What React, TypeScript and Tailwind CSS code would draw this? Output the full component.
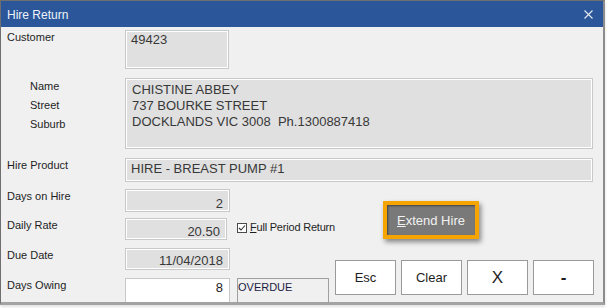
import React from "react";

const ro =
  "bg-[#e0e0e0] border border-[#c8c8c8] shadow-[inset_0_0_0_1px_#ffffff] text-[13px] text-[#383838]";

function Label({ children }: { children: React.ReactNode }) {
  return <div className="w-[124px] pl-[6px] pt-[1px] shrink-0">{children}</div>;
}

function Btn({ children, cls = "" }: { children: React.ReactNode; cls?: string }) {
  return (
    <div
      className={
        "w-[61px] h-[35px] bg-white border border-[#9a9a9a] flex items-center justify-center text-[#1e1e1e] " +
        cls
      }
    >
      {children}
    </div>
  );
}

export default function App() {
  return (
    <div className="w-[607px] h-[308px] bg-white font-['Liberation_Sans',Arial,sans-serif]">
      <div className="w-[605px] border-t border-l border-[#6f6f6f] border-r-2 border-r-[#8c8c8c] border-b-[3px] border-b-[#a3a3a3] shadow-[0_2px_3px_rgba(0,0,0,0.12)]">
        {/* title bar */}
        <div className="h-[26px] bg-[#2b579a] flex items-center justify-between pl-[6px] pr-[10px] pt-[2px]">
          <span className="text-[12px] leading-[14px] text-[#eef2f8]">Hire Return</span>
          <svg width="9" height="9" viewBox="0 0 9 9" className="-mt-[2px]">
            <path d="M0.5 0.5 L8.5 8.5 M8.5 0.5 L0.5 8.5" stroke="#e4e9f1" strokeWidth="1.1" />
          </svg>
        </div>

        {/* body */}
        <div className="h-[275px] bg-[#f0f0f0] overflow-hidden pt-[3px] text-[11px] leading-[13px] text-[#1e1e1e]">
          {/* Customer */}
          <div className="flex">
            <Label>Customer</Label>
            <div className={ro + " w-[104px] h-[39px] pl-[5px] pt-[1px] leading-[16px]"}>49423</div>
          </div>

          {/* Address */}
          <div className="flex mt-[9px]">
            <div className="w-[124px] pl-[29px] pt-[2px] shrink-0 flex flex-col">
              <div className="h-[19px]">Name</div>
              <div className="h-[19px]">Street</div>
              <div className="h-[19px]">Suburb</div>
            </div>
            <div className={ro + " w-[468px] h-[71px] pl-[6px] pt-[3px] leading-[16px]"}>
              <div>CHISTINE ABBEY</div>
              <div>737 BOURKE STREET</div>
              <div className="whitespace-pre">DOCKLANDS VIC 3008  Ph.1300887418</div>
            </div>
          </div>

          {/* Hire Product */}
          <div className="flex mt-[9px]">
            <Label>Hire Product</Label>
            <div className={ro + " w-[468px] h-[24px] pl-[5px] pt-[2px] leading-[16px]"}>
              HIRE - BREAST PUMP #1
            </div>
          </div>

          <div className="flex">
            {/* left column */}
            <div className="w-[334px] shrink-0">
              <div className="flex mt-[7px]">
                <Label>Days on Hire</Label>
                <div className={ro + " w-[105px] h-[23px] pr-[6px] pt-[7px] leading-[13px] text-right"}>2</div>
              </div>
              <div className="flex mt-[6px] h-[22px]">
                <Label>Daily Rate</Label>
                <div className={ro + " w-[105px] h-[22px] pr-[6px] pt-[6px] leading-[13px] text-right"}>20.50</div>
                <div className="flex items-start ml-[10px] pt-[3px] whitespace-nowrap shrink-0">
                  <div className="mt-[2px] w-[10px] h-[10px] shrink-0 border border-[#4a4a4a] bg-white flex items-center justify-center">
                    <svg width="8" height="8" viewBox="0 0 8 8">
                      <path d="M1 4 L3 6 L7 1.5" stroke="#333" strokeWidth="1.1" fill="none" />
                    </svg>
                  </div>
                  <span className="ml-[3px] tracking-[-0.2px]">
                    <span className="underline">F</span>ull Period Return
                  </span>
                </div>
              </div>
              <div className="flex mt-[8px]">
                <Label>Due Date</Label>
                <div className={ro + " w-[105px] h-[22px] pr-[6px] pt-[5px] leading-[13px] text-right"}>11/04/2018</div>
              </div>
              <div className="flex mt-[8px]">
                <Label>Days Owing</Label>
                <div className="w-[105px] h-[26px] bg-white border border-[#c8c8c8] pr-[6px] pt-[2px] text-[13px] leading-[13px] text-right text-[#1e1e1e]">
                  8
                </div>
                <div className="ml-[7px] w-[92px] h-[26px] border border-[#a0a0a0] pt-[2px] text-[#1c1c40]">
                  OVERDUE
                </div>
              </div>
            </div>

            {/* right column */}
            <div>
              <div className="mt-[19px] ml-[48px] w-[96px] h-[38px] border-[4px] border-[#f5a400] shadow-[2px_3px_5px_rgba(0,0,0,0.45)]">
                <div className="w-full h-full bg-[#797979] shadow-[inset_1px_1px_2px_rgba(0,0,0,0.45)] flex items-center justify-center text-[13px] leading-[15px] text-[#f2f2f2]">
                  <span>
                    <span className="underline">E</span>xtend Hire
                  </span>
                </div>
              </div>
              <div className="flex gap-[5px] mt-[21px] text-[13px]">
                <Btn>Esc</Btn>
                <Btn>Clear</Btn>
                <Btn cls="text-[17px]">X</Btn>
                <Btn cls="text-[17px] font-bold">-</Btn>
              </div>
            </div>
          </div>
        </div>
      </div>
    </div>
  );
}
